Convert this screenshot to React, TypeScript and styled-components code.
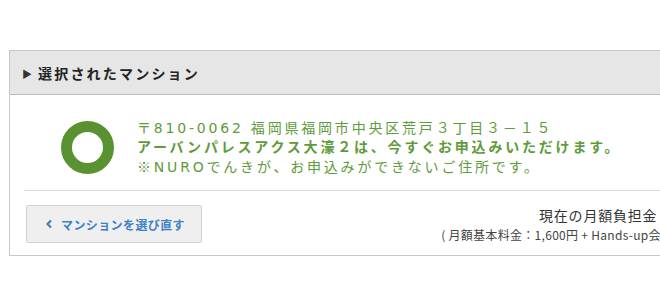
import styled, { createGlobalStyle } from 'styled-components';

const GlobalStyle = createGlobalStyle`
  html, body {
    margin: 0;
    padding: 0;
    overflow: hidden;
    background: #fff;
  }
  body {
    font-family: "Noto Sans CJK JP", "Noto Sans", "Liberation Sans", sans-serif;
    color: #333;
  }
`;

const Page = styled.div`
  width: 660px;
  height: 300px;
  overflow: hidden;
  padding: 50px 0 0 9px;
  box-sizing: border-box;
`;

const Panel = styled.section`
  width: 734px;
  border: 1px solid #c8c8c8;
  box-sizing: border-box;
`;

const PanelHeader = styled.h2`
  margin: 0;
  height: 43px;
  display: flex;
  align-items: center;
  gap: 6px;
  padding-left: 12px;
  background: #e6e6e6;
  border-bottom: 1px solid #bcbcbc;
  font-size: 14px;
  font-weight: 700;
  letter-spacing: 2.2px;
  color: #222;
`;

const Arrow = styled.span`
  font-size: 10px;
  letter-spacing: 0;
  color: #333;
  transform: translateY(1px);
`;

const PanelBody = styled.div`
  padding: 0 14px 12px;
`;

const Message = styled.div`
  display: flex;
  align-items: center;
  gap: 23px;
  padding: 23px 0 13px 37px;
  border-bottom: 1px solid #dcdcdc;
`;

const Ring = styled.div`
  width: 53px;
  height: 53px;
  flex: none;
  border-radius: 50%;
  border: 11px solid #5a9232;
  box-sizing: border-box;
`;

const MessageText = styled.div`
  color: #5e9b3a;
  font-family: "DejaVu Sans", "Noto Sans CJK JP", sans-serif;
  font-size: 14px;
  line-height: 19px;
  letter-spacing: 2.8px;
  white-space: nowrap;
`;

const Line = styled.p<{ $bold?: boolean }>`
  margin: 0;
  font-weight: ${(p) => (p.$bold ? 700 : 400)};
`;

const Mark = styled.span`
  font-family: "Noto Sans CJK JP", sans-serif;
`;

const Footer = styled.div`
  display: flex;
  align-items: flex-start;
  justify-content: space-between;
  padding: 14px 2px 0;
`;

const BackButton = styled.button`
  width: 176px;
  height: 38px;
  display: flex;
  align-items: center;
  gap: 8px;
  padding: 0 0 0 18px;
  background: #efefef;
  border: 1px solid #d2d2d2;
  border-radius: 2px;
  color: #3c80c6;
  font-family: inherit;
  font-size: 12px;
  font-weight: 700;
  letter-spacing: 0.4px;
  cursor: pointer;
`;

const Summary = styled.div`
  display: flex;
  flex-direction: column;
  align-items: flex-end;
  white-space: nowrap;
`;

const Total = styled.div`
  font-size: 14px;
  line-height: 20px;
  letter-spacing: 0.8px;
  color: #333;
`;

const Breakdown = styled.div`
  margin-top: 1px;
  font-size: 12px;
  line-height: 17px;
  letter-spacing: 0.3px;
  color: #444;
`;

export default function App() {
  return (
    <Page>
      <GlobalStyle />
      <Panel>
        <PanelHeader>
          <Arrow>▶</Arrow>
          選択されたマンション
        </PanelHeader>
        <PanelBody>
          <Message>
            <Ring />
            <MessageText>
              <Line><Mark>〒</Mark>810-0062 福岡県福岡市中央区荒戸３丁目３－１５</Line>
              <Line $bold>アーバンパレスアクス大濠２は、今すぐお申込みいただけます。</Line>
              <Line><Mark>※</Mark>NUROでんきが、お申込みができないご住所です。</Line>
            </MessageText>
          </Message>
          <Footer>
            <BackButton type="button">
              <svg width="8" height="10" viewBox="0 0 8 10" aria-hidden="true">
                <path d="M6 1.5 L2.5 5 L6 8.5" fill="none" stroke="#3c80c6" strokeWidth="2.2" />
              </svg>
              マンションを選び直す
            </BackButton>
            <Summary>
              <Total>現在の月額負担金：1,600円</Total>
              <Breakdown>( 月額基本料金：1,600円 + Hands-up会費：500円 )</Breakdown>
            </Summary>
          </Footer>
        </PanelBody>
      </Panel>
    </Page>
  );
}
